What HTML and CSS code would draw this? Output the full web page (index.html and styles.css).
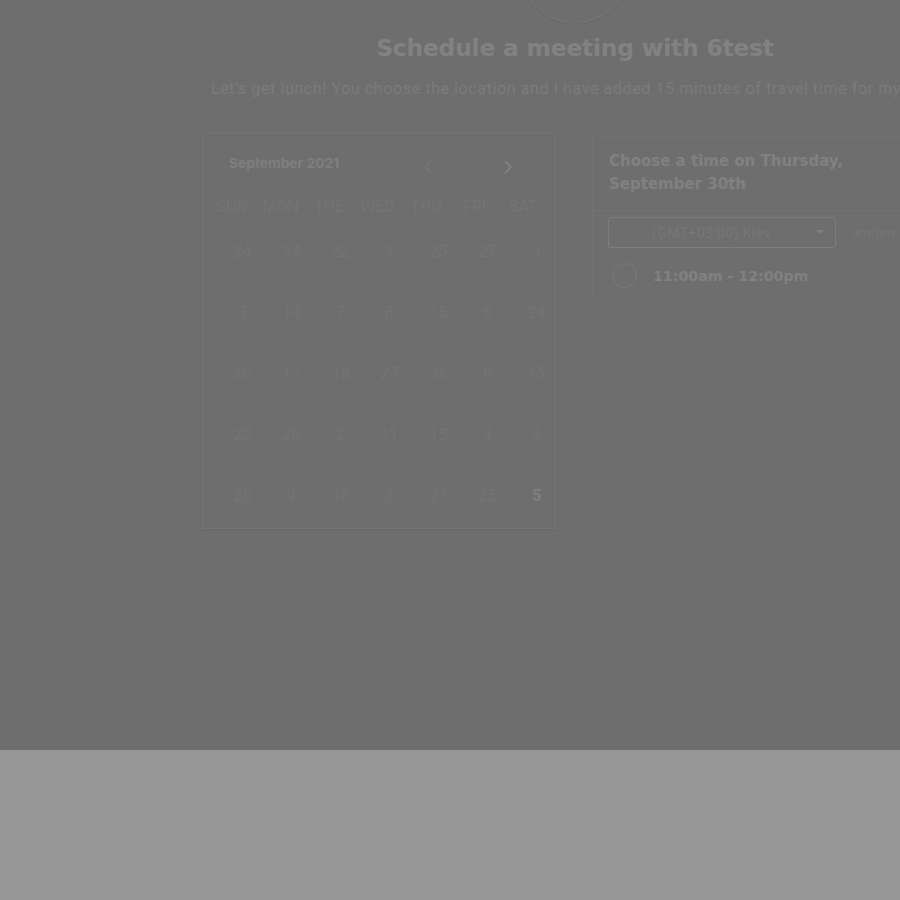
FILE: index.html
```html
<!DOCTYPE html>
<html>
<head>
<meta charset="utf-8">
<link rel="stylesheet" href="styles.css">
</head>
<body>
<div class="page">
  <div class="wrap">
    <div class="avatar-row"><div class="avatar"></div></div>
    <h1 class="title">Schedule a meeting with 6test</h1>
    <p class="subtitle">Let's get lunch! You choose the location and I have added 15 minutes of travel time for my</p>
    <div class="columns">
      <div class="calendar">
        <div class="cal-head">
          <span class="month">September 2021</span>
          <span class="arrow prev"><svg width="10" height="14" viewBox="0 0 10 14"><path d="M8 1 L2 7 L8 13" fill="none" stroke="currentColor" stroke-width="1.6"/></svg></span>
          <span class="arrow next"><svg width="10" height="14" viewBox="0 0 10 14"><path d="M2 1 L8 7 L2 13" fill="none" stroke="currentColor" stroke-width="1.6"/></svg></span>
        </div>
        <div class="weekdays">
          <span>SUN</span><span>MON</span><span>TUE</span><span>WED</span><span>THU</span><span>FRI</span><span>SAT</span>
        </div>
        <div class="dates">
          <span>24</span><span>24</span><span>22</span><span>3</span><span>25</span><span>27</span><span>3</span>
          <span>3</span><span>14</span><span>7</span><span>8</span><span>15</span><span>6</span><span>24</span>
          <span>20</span><span>17</span><span>15</span><span>27</span><span>26</span><span>8</span><span>15</span>
          <span>22</span><span>20</span><span>2</span><span>11</span><span>15</span><span>3</span><span>3</span>
          <span>26</span><span>9</span><span>16</span><span>8</span><span>27</span><span>25</span><span class="active">5</span>
        </div>
      </div>
      <div class="times">
        <div class="times-head">Choose a time on Thursday,<br>September 30th</div>
        <div class="times-body">
          <div class="controls">
            <div class="select"><span>(GMT+03:00) Kiev</span><svg class="caret" width="8" height="5" viewBox="0 0 8 5"><path d="M0 0 L8 0 L4 4 Z" fill="currentColor"/></svg></div>
            <span class="ampm">am/pm</span>
          </div>
          <div class="slot"><span class="radio"></span><span class="slot-text">11:00am - 12:00pm</span></div>
        </div>
      </div>
    </div>
  </div>
</div>
<div class="footer"></div>
</body>
</html>
```
FILE: styles.css
```css
html, body {
  margin: 0;
  padding: 0;
  overflow: hidden;
  width: 900px;
  height: 900px;
  font-family: Roboto, "Liberation Sans", sans-serif;
}
.page {
  height: 750px;
  background: #6e6e6e;
  overflow: hidden;
}
.footer {
  height: 150px;
  background: #969696;
}
.wrap {
  width: 1150px;
  text-align: center;
}
.avatar-row {
  height: 22px;
  display: flex;
  justify-content: center;
  overflow: hidden;
}
.avatar {
  width: 112px;
  height: 112px;
  flex: none;
  border-radius: 50%;
  border: 1px solid #787878;
  box-shadow: 0 1px 2px rgba(0,0,0,0.08);
  margin-top: -91px;
}
.title {
  margin: 12px 0 0;
  font-family: "DejaVu Sans", sans-serif;
  font-weight: 700;
  font-size: 23.4px;
  line-height: 28px;
  color: #828282;
  letter-spacing: -0.2px;
}
.subtitle {
  margin: 18px 0 0;
  padding-left: 211px;
  text-align: left;
  font-size: 16px;
  line-height: 18px;
  color: #7b7b7b;
  white-space: nowrap;
  letter-spacing: 0.6px;
}
.columns {
  display: flex;
  align-items: flex-start;
  gap: 36px;
  padding-left: 202px;
  margin-top: 34px;
  text-align: left;
}
.calendar {
  width: 352px;
  height: 395px;
  border: 1px solid #757575;
  box-shadow: 0 1px 2px rgba(0,0,0,0.06);
  flex: none;
}
.cal-head {
  display: flex;
  align-items: center;
  height: 58px;
  padding-left: 26px;
  color: #7f7f7f;
}
.month {
  font-family: Inter, "Open Sans", sans-serif;
  font-weight: 700;
  font-size: 13.8px;
  width: 194px;
  margin-top: 1px;
}
.arrow {
  display: flex;
  color: #787878;
  margin-top: 10px;
}
.arrow.next {
  margin-left: 70px;
  color: #848484;
}
.weekdays {
  display: grid;
  grid-template-columns: repeat(7, 48.5px);
  padding-left: 5px;
  height: 30px;
  align-items: center;
  font-size: 16px;
  color: #747474;
  text-align: center;
  margin-top: 0;
}
.dates {
  display: grid;
  grid-template-columns: repeat(7, 49px);
  grid-auto-rows: 61px;
  padding-left: 15px;
  margin-top: 16px;
  font-size: 16px;
  color: #747474;
  text-align: center;
}
.dates span {
  line-height: 30px;
}
.dates .active {
  color: #7f7f7f;
  font-weight: 700;
}
.times {
  width: 330px;
  height: 163px;
  margin-top: 4px;
  border: 1px solid #727272;
  flex: none;
}
.times-head {
  padding: 13px 16px 14px;
  font-family: "DejaVu Sans", sans-serif;
  font-weight: 700;
  font-size: 15px;
  line-height: 23px;
  color: #818181;
  border-bottom: 1px solid #747474;
}
.times-body {
  padding: 6px 15px 0;
}
.controls {
  display: flex;
  align-items: center;
  gap: 16px;
}
.select {
  width: 226px;
  height: 29px;
  border: 1px solid #7d7d7d;
  border-radius: 2px;
  display: flex;
  align-items: center;
  color: #777777;
  font-size: 14px;
  letter-spacing: 0.4px;
}
.select span {
  padding-left: 43px;
}
.caret {
  margin-left: auto;
  margin-right: 11px;
  color: #7c7c7c;
}
.ampm {
  font-size: 13px;
  color: #767676;
}
.slot {
  display: flex;
  align-items: center;
  margin-top: 15px;
  padding-left: 4px;
}
.radio {
  width: 25px;
  height: 25px;
  border: 1.5px solid #7a7a7a;
  border-radius: 50%;
  box-sizing: border-box;
}
.slot-text {
  margin-left: 16px;
  font-family: "DejaVu Sans", sans-serif;
  font-weight: 700;
  font-size: 14.2px;
  color: #818181;
}
```
